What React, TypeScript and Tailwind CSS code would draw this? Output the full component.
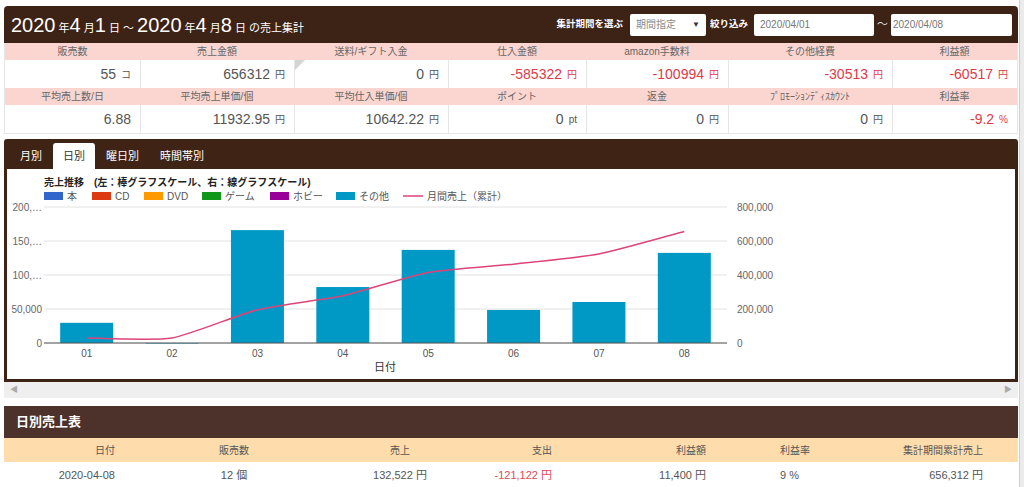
import React from 'react';

const FONT = "font-['Liberation_Sans','Noto_Sans_CJK_JP',sans-serif]";

const bars = [29690, 0, 166000, 82300, 136900, 48600, 60300, 132522];
const days = ['01', '02', '03', '04', '05', '06', '07', '08'];

const X0 = 44;
const X1 = 727;
const Y0 = 344;
const PH = 136;
const step = (X1 - X0) / 8;
const yL = (v: number) => Y0 - (v / 200000) * PH;
const yR = (v: number) => Y0 - (v / 800000) * PH;

function smoothPath(pts: number[][]) {
  let d = `M${pts[0][0]},${pts[0][1]}`;
  for (let i = 0; i < pts.length - 1; i++) {
    const p0 = pts[i - 1] || pts[i];
    const p1 = pts[i];
    const p2 = pts[i + 1];
    const p3 = pts[i + 2] || p2;
    const k = 1 / 10;
    const c1 = [p1[0] + (p2[0] - p0[0]) * k, p1[1] + (p2[1] - p0[1]) * k];
    const c2 = [p2[0] - (p3[0] - p1[0]) * k, p2[1] - (p3[1] - p1[1]) * k];
    d += ` C${c1[0]},${c1[1]} ${c2[0]},${c2[1]} ${p2[0]},${p2[1]}`;
  }
  return d;
}

const legend = [
  { label: '本', color: '#3366cc', x: 44 },
  { label: 'CD', color: '#dc3912', x: 92 },
  { label: 'DVD', color: '#ff9900', x: 144 },
  { label: 'ゲーム', color: '#109618', x: 202 },
  { label: 'ホビー', color: '#990099', x: 270 },
  { label: 'その他', color: '#0099c6', x: 336 },
];

function SalesChart() {
  let cum = 0;
  const linePts = bars.map((b, i) => {
    cum += b;
    return [X0 + step * (i + 0.5), yR(cum)];
  });
  const grid = [0, 1, 2, 3, 4];
  const leftLabels = ['0', '50,000', '100,…', '150,…', '200,…'];
  const rightLabels = ['0', '200,000', '400,000', '600,000', '800,000'];

  return (
    <svg width="1008" height="210" viewBox="7 170 1008 210" className="block">
      <text x="44" y="187" fontSize="10" fontWeight="bold" fill="#222">
        売上推移
      </text>
      <text x="94" y="187" fontSize="10" fontWeight="bold" fill="#222">
        (左：棒グラフスケール、右：線グラフスケール)
      </text>
      {legend.map((l) => (
        <g key={l.label}>
          <rect x={l.x} y={193} width={19} height={8} fill={l.color} />
          <text x={l.x + 23} y={201} fontSize="10" fill="#555">
            {l.label}
          </text>
        </g>
      ))}
      <line x1="403" y1="197" x2="423" y2="197" stroke="#dd4477" strokeWidth="1.5" />
      <text x="427" y="201" fontSize="10" fill="#555">
        月間売上（累計）
      </text>

      {grid.map((g) => (
        <line
          key={g}
          x1={X0}
          x2={X1}
          y1={Y0 - g * 34}
          y2={Y0 - g * 34}
          stroke="#e2e2e2"
          strokeWidth="1"
        />
      ))}
      {grid.map((g) => (
        <text key={'l' + g} x="42" y={Y0 - g * 34 + 3.5} fontSize="10" fill="#666" textAnchor="end">
          {leftLabels[g]}
        </text>
      ))}
      {grid.map((g) => (
        <text key={'r' + g} x="737" y={Y0 - g * 34 + 3.5} fontSize="10" fill="#666">
          {rightLabels[g]}
        </text>
      ))}

      {bars.map((b, i) => {
        const cx = X0 + step * (i + 0.5);
        const top = yL(b);
        return <rect key={i} x={cx - 26.5} y={top} width={53} height={Math.max(Y0 - top, 0.5)} fill="#0099c6" />;
      })}
      <line x1={X0} x2={X1} y1={Y0} y2={Y0} stroke="#555" strokeWidth="1" />

      <path d={smoothPath(linePts)} fill="none" stroke="#dd4477" strokeWidth="1.5" />

      {days.map((d, i) => (
        <text key={d} x={X0 + step * (i + 0.5)} y={358} fontSize="10" fill="#555" textAnchor="middle">
          {d}
        </text>
      ))}
      <text x="385" y="372" fontSize="11" fill="#333" textAnchor="middle">
        日付
      </text>
    </svg>
  );
}

type Stat = { label: string; value: string; unit: string; red?: boolean; marker?: boolean };

const row1: Stat[] = [
  { label: '販売数', value: '55', unit: 'コ' },
  { label: '売上金額', value: '656312', unit: '円' },
  { label: '送料/ギフト入金', value: '0', unit: '円', marker: true },
  { label: '仕入金額', value: '-585322', unit: '円', red: true },
  { label: 'amazon手数料', value: '-100994', unit: '円', red: true },
  { label: 'その他経費', value: '-30513', unit: '円', red: true },
  { label: '利益額', value: '-60517', unit: '円', red: true },
];

const row2: Stat[] = [
  { label: '平均売上数/日', value: '6.88', unit: '' },
  { label: '平均売上単価/個', value: '11932.95', unit: '円' },
  { label: '平均仕入単価/個', value: '10642.22', unit: '円' },
  { label: 'ポイント', value: '0', unit: 'pt' },
  { label: '返金', value: '0', unit: '円' },
  { label: 'ﾌﾟﾛﾓｰｼｮﾝﾃﾞｨｽｶｳﾝﾄ', value: '0', unit: '円' },
  { label: '利益率', value: '-9.2', unit: '%', red: true },
];

function StatRows({ items }: { items: Stat[] }) {
  return (
    <>
      {items.map((s) => (
        <div key={s.label} className="h-[17px] bg-[#fbd6d1] text-[10px] text-[#666] flex items-center justify-center">
          {s.label}
        </div>
      ))}
      {items.map((s, i) => (
        <div
          key={s.label + 'v'}
          className={`relative h-[28px] bg-white flex items-center justify-end pr-[9px] border-[#e6e6e6] ${
            i > 0 ? 'border-l' : ''
          } ${s.red ? 'text-[#de3a48]' : 'text-[#555]'}`}
        >
          {s.marker && (
            <svg className="absolute left-0 top-0" width="10" height="10" viewBox="0 0 10 10">
              <polygon points="0,0 10,0 0,10" fill="#d4d4d4" />
            </svg>
          )}
          <span className="text-[14px]">{s.value}</span>
          {s.unit && <span className="text-[10px] ml-[5px]">{s.unit}</span>}
        </div>
      ))}
    </>
  );
}

const tableCols = 'grid grid-cols-[126px_208px_124px_108px_206px_94px_1fr]';

function DailyTable() {
  const head = ['日付', '販売数', '売上', '支出', '利益額', '利益率', '集計期間累計売上'];
  const row = ['2020-04-08', '12 個', '132,522 円', '-121,122 円', '11,400 円', '9 %', '656,312 円'];
  const align = [
    'justify-end pr-[15px]',
    'justify-center',
    'justify-center',
    'justify-end pr-[18px]',
    'justify-end pr-[70px]',
    'justify-start pl-[4px]',
    'justify-end pr-[35px]',
  ];
  return (
    <div>
      <div className="h-[32px] bg-[#4d312b] flex items-center pl-[12px] text-white text-[13px] font-bold">
        日別売上表
      </div>
      <div className={`${tableCols} h-[24px] bg-[#fedcab] text-[10px] text-[#555]`}>
        {head.map((h, i) => (
          <div key={h} className={`flex items-center ${align[i]}`}>
            {h}
          </div>
        ))}
      </div>
      <div className={`${tableCols} h-[26px] bg-white text-[11px] text-[#555]`}>
        {row.map((c, i) => (
          <div key={c} className={`flex items-center ${align[i]} ${i === 3 ? 'text-[#e04a55]' : ''}`}>
            {c}
          </div>
        ))}
      </div>
    </div>
  );
}

export default function App() {
  return (
    <div className={`${FONT} w-[1024px] h-[487px] overflow-hidden bg-white flex`}>
      <div className="w-[1014px] ml-[4px] pt-[6px]">
        {/* header */}
        <div className="h-[37px] bg-[#3d2216] rounded-t-[4px] flex items-center justify-between pl-[7px] pr-[6px] text-white">
          <div className="flex items-baseline whitespace-pre">
            <span className="text-[20px]">2020</span>
            <span className="text-[11px]"> 年</span>
            <span className="text-[20px]">4</span>
            <span className="text-[11px]"> 月</span>
            <span className="text-[20px]">1</span>
            <span className="text-[11px]"> 日 ～ </span>
            <span className="text-[20px]">2020</span>
            <span className="text-[11px]"> 年</span>
            <span className="text-[20px]">4</span>
            <span className="text-[11px]"> 月</span>
            <span className="text-[20px]">8</span>
            <span className="text-[11px]"> 日 の売上集計</span>
          </div>
          <div className="flex items-center text-[10px]">
            <span className="font-bold text-[9.5px]">集計期間を選ぶ</span>
            <div className="ml-[7px] w-[76px] h-[22px] bg-white rounded-[2px] flex items-center justify-between px-[6px] text-[#888]">
              <span>期間指定</span>
              <span className="text-[#333] text-[8px]">▼</span>
            </div>
            <span className="ml-[4px] font-bold text-[9.5px]">絞り込み</span>
            <div className="ml-[6px] w-[120px] h-[22px] bg-white rounded-[2px] flex items-center px-[6px] text-[#777]">
              2020/04/01
            </div>
            <span className="mx-[3px] text-[#ddd] text-[11px]">～</span>
            <div className="w-[121px] h-[22px] bg-white rounded-[2px] flex items-center px-[2px] text-[#777]">
              2020/04/08
            </div>
          </div>
        </div>

        {/* stats */}
        <div className="grid grid-cols-[135px_154px_154px_138px_142px_164px_1fr] border-x border-b border-[#e6e6e6]">
          <StatRows items={row1} />
          <StatRows items={row2} />
        </div>

        {/* tabs + chart */}
        <div className="mt-[5px] bg-[#3f2415] rounded-t-[3px] px-[3px] pb-[3px]">
          <div className="h-[30px] flex items-end pl-[3px] gap-[1px] text-[11px]">
            <div className="h-[26px] px-[10px] flex items-center text-white">月別</div>
            <div className="h-[26px] px-[10px] flex items-center bg-white text-[#333] rounded-t-[3px]">日別</div>
            <div className="h-[26px] px-[10px] flex items-center text-white">曜日別</div>
            <div className="h-[26px] px-[10px] flex items-center text-white">時間帯別</div>
          </div>
          <div className="bg-white h-[210px]">
            <SalesChart />
          </div>
        </div>
        <div className="h-[16px] bg-[#efefef] flex items-center justify-between px-[6px] text-[#aaa] text-[8px]">
          <span>◀</span>
          <span>▶</span>
        </div>

        <div className="mt-[8px]">
          <DailyTable />
        </div>
      </div>
      <div className="ml-[1px] w-[5px] bg-[#ebebeb] border-l border-[#cfcfcf]" />
    </div>
  );
}
